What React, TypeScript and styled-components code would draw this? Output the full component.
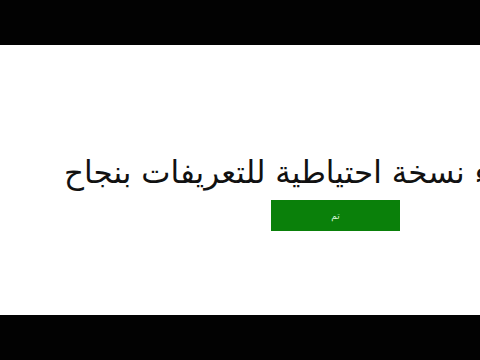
import styled, { createGlobalStyle } from 'styled-components'

const Global = createGlobalStyle`
  html, body {
    margin: 0;
    padding: 0;
    background: #000;
  }
`;

const Frame = styled.div`
  width: 480px;
  height: 360px;
  display: flex;
  flex-direction: column;
  background: #000;
`;

const Bar = styled.div`
  height: 45px;
  flex: none;
  background: #020202;
`;

const Stage = styled.div`
  flex: 1;
  background: #fff;
  overflow: hidden;
  display: flex;
  flex-direction: column;
  align-items: flex-start;
  padding-top: 109px;
`;

const Message = styled.div`
  direction: rtl;
  white-space: nowrap;
  margin-left: 64px;
  font-family: "DejaVu Sans", sans-serif;
  font-size: 31px;
  line-height: 36px;
  color: #111;
`;

const OkButton = styled.button`
  margin-left: 271px;
  margin-top: 10px;
  width: 129px;
  height: 31px;
  border: 0;
  background: #0a800a;
  color: #d8f5d8;
  font-family: "DejaVu Sans", sans-serif;
  font-size: 9px;
  padding: 0;
`;

const App = () => {
    return (
        <Frame>
            <Global />
            <Bar />
            <Stage>
                <Message>تم إنشاء نسخة احتياطية للتعريفات بنجاح</Message>
                <OkButton>تم</OkButton>
            </Stage>
            <Bar />
        </Frame>
    );
}

export default App;
